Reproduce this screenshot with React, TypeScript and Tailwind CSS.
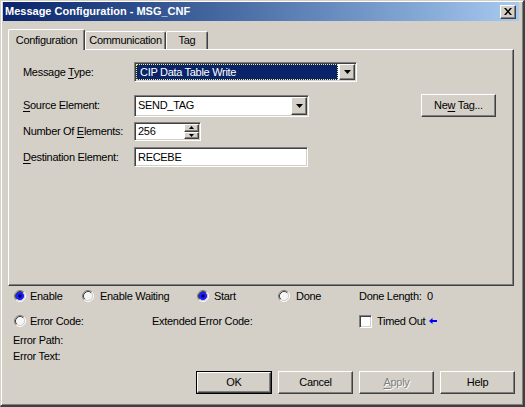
const raised =
  'border border-t-white border-l-white border-r-[#404040] border-b-[#404040] shadow-[inset_-1px_-1px_0_#808080] bg-[#d4d0c8]';
const sunken =
  'border border-t-[#808080] border-l-[#808080] border-r-white border-b-white shadow-[inset_1px_1px_0_#404040,inset_-1px_-1px_0_#d4d0c8]';

function DownArrow() {
  return (
    <svg width="7" height="4" viewBox="0 0 7 4">
      <path d="M0 0h7L3.5 4z" fill="#000" />
    </svg>
  );
}

function ComboButton() {
  return (
    <div className={`${raised} w-[16px] h-full flex items-center justify-center shrink-0`}>
      <DownArrow />
    </div>
  );
}

function Radio({ checked = false }: { checked?: boolean }) {
  return (
    <svg width="12" height="12" viewBox="0 0 12 12" className="shrink-0">
      <circle cx="6" cy="6" r="4.5" fill={checked ? '#1e1eff' : '#f4f4f4'} />
      {checked && <circle cx="6" cy="6" r="1.8" fill="#000060" />}
      <path d="M2.11 9.89A5.5 5.5 0 0 1 9.89 2.11" stroke="#808080" fill="none" />
      <path d="M9.89 2.11A5.5 5.5 0 0 1 2.11 9.89" stroke="#ffffff" fill="none" />
      <path d="M2.82 9.18A4.5 4.5 0 0 1 9.18 2.82" stroke="#404040" fill="none" />
      <path d="M9.18 2.82A4.5 4.5 0 0 1 2.82 9.18" stroke="#d4d0c8" fill="none" />
    </svg>
  );
}

function Tab({ label, selected = false, width }: { label: string; selected?: boolean; width: string }) {
  return (
    <div
      className={`${width} flex items-center justify-center bg-[#d4d0c8] border-t border-l border-r border-t-white border-l-white border-r-[#404040] shadow-[inset_-1px_0_0_#808080] rounded-t-[2px] ${
        selected ? 'h-[21px] -mb-px relative z-10' : 'h-[18px]'
      }`}
    >
      {label}
    </div>
  );
}

function Button({ children, isDefault = false, disabled = false }: { children: React.ReactNode; isDefault?: boolean; disabled?: boolean }) {
  const inner = (
    <div
      className={`${raised} w-full h-full flex items-center justify-center ${
        disabled ? 'text-[#808080] [text-shadow:1px_1px_0_#fff]' : ''
      }`}
    >
      <span>{children}</span>
    </div>
  );
  if (isDefault) {
    return <div className="w-[76px] h-[23px] border border-black">{inner}</div>;
  }
  return <div className="w-[75px] h-[23px]">{inner}</div>;
}

function Label({ children }: { children: React.ReactNode }) {
  return <div className="w-[111px] shrink-0">{children}</div>;
}

const u = 'underline underline-offset-[2px]';

export default function App() {
  return (
    <div className="w-[525px] h-[407px] bg-[#d4d0c8] font-['Liberation_Sans',Arial,sans-serif] text-[11px] tracking-[-0.3px] text-black leading-none overflow-hidden">
      <div className="w-full h-full flex flex-col border-t border-l border-t-[#d4d0c8] border-l-[#d4d0c8] border-r-2 border-b-2 border-r-[#404040] border-b-[#404040] shadow-[inset_1px_1px_0_#fff,inset_-1px_-1px_0_#808080] pt-[1px] pl-[2px] pr-[2px]">
        {/* title bar */}
        <div className="h-[19px] mr-[2px] flex items-center justify-between bg-linear-to-r from-[#0a246a] to-[#a6caf0] pl-[2px] pr-[3px]">
          <span className="text-white font-bold tracking-normal">Message Configuration - MSG_CNF</span>
          <div className={`${raised} w-[16px] h-[14px] flex items-center justify-center`}>
            <svg width="8" height="7" viewBox="0 0 8 7">
              <path d="M0 0h2l2 2.5L6 0h2L5 3.5 8 7H6L4 4.5 2 7H0l3-3.5z" fill="#000" />
            </svg>
          </div>
        </div>

        {/* tabs */}
        <div className="mt-[8px] ml-[5px] flex flex-col">
          <div className="flex items-end h-[20px]">
            <Tab label="Configuration" selected width="w-[77px]" />
            <Tab label="Communication" width="w-[81px]" />
            <Tab label="Tag" width="w-[42px]" />
          </div>
          <div className="w-[506px] h-[237px] border border-t-white border-l-white border-r-[#404040] border-b-[#404040] shadow-[inset_-1px_-1px_0_#808080] pl-[14px] flex flex-col">
            <div className="mt-[12px] h-[20px] flex items-center">
              <Label>
                Message <span className={u}>T</span>ype:
              </Label>
              <div className={`${sunken} w-[223px] h-full flex p-[1px] bg-white`}>
                <div className="flex-1 flex items-center bg-[#0a246a] text-white border border-dotted border-[#f0f08a] pl-[3px] mr-[1px]">
                  CIP Data Table Write
                </div>
                <ComboButton />
              </div>
            </div>

            <div className="mt-[12px] h-[23px] flex items-center">
              <Label>
                <span className={u}>S</span>ource Element:
              </Label>
              <div className={`${sunken} w-[175px] h-[22px] flex p-[1px] bg-white`}>
                <div className="flex-1 flex items-center pl-[2px]">SEND_TAG</div>
                <ComboButton />
              </div>
              <div className="ml-[112px]">
                <Button>
                  Ne<span className={u}>w</span> Tag...
                </Button>
              </div>
            </div>

            <div className="mt-[5px] h-[19px] flex items-center">
              <Label>
                Number Of <span className={u}>E</span>lements:
              </Label>
              <div className={`${sunken} w-[67px] h-full flex p-[1px] bg-white`}>
                <div className="flex-1 flex items-center pl-[2px]">256</div>
                <div className="w-[15px] h-full flex flex-col">
                  <div className={`${raised} flex-1 flex items-center justify-center`}>
                    <svg width="5" height="3" viewBox="0 0 5 3">
                      <path d="M2.5 0L5 3H0z" fill="#000" />
                    </svg>
                  </div>
                  <div className={`${raised} flex-1 flex items-center justify-center`}>
                    <svg width="5" height="3" viewBox="0 0 5 3">
                      <path d="M0 0h5L2.5 3z" fill="#000" />
                    </svg>
                  </div>
                </div>
              </div>
            </div>

            <div className="mt-[6px] h-[20px] flex items-center">
              <Label>
                <span className={u}>D</span>estination Element:
              </Label>
              <div className={`${sunken} w-[174px] h-full flex items-center pl-[3px] bg-white`}>RECEBE</div>
            </div>
          </div>
        </div>

        {/* status area */}
        <div className="mt-[2px] ml-[11px] h-[16px] flex items-center">
          <div className="w-[68px] flex items-center gap-[4px]">
            <Radio checked />
            <span>Enable</span>
          </div>
          <div className="w-[115px] flex items-center gap-[6px]">
            <Radio />
            <span>Enable Waiting</span>
          </div>
          <div className="w-[81px] flex items-center gap-[5px]">
            <Radio checked />
            <span>Start</span>
          </div>
          <div className="w-[81px] flex items-center gap-[6px]">
            <Radio />
            <span>Done</span>
          </div>
          <span>Done Length:&nbsp; 0</span>
        </div>

        <div className="mt-[9px] ml-[11px] h-[16px] flex items-center">
          <div className="w-[138px] flex items-center gap-[4px]">
            <Radio />
            <span>Error Code:</span>
          </div>
          <div className="w-[207px]">Extended Error Code:</div>
          <div className="flex items-center">
            <div className={`${sunken} w-[13px] h-[13px] bg-white`} />
            <span className="ml-[5px]">Timed Out</span>
            <svg width="8" height="6" viewBox="0 0 8 6" className="ml-[4px]">
              <path d="M0 3L3.5 0v2H8v2H3.5v2z" fill="#0000ff" />
            </svg>
          </div>
        </div>

        <div className="mt-[4px] ml-[10px] h-[14px] flex items-center">Error Path:</div>
        <div className="mt-[2px] ml-[10px] h-[14px] flex items-center">Error Text:</div>

        <div className="mt-[8px] ml-[193px] flex gap-[6px]">
          <Button isDefault>OK</Button>
          <Button>Cancel</Button>
          <Button disabled>
            <span className={u}>A</span>pply
          </Button>
          <Button>Help</Button>
        </div>
      </div>
    </div>
  );
}
